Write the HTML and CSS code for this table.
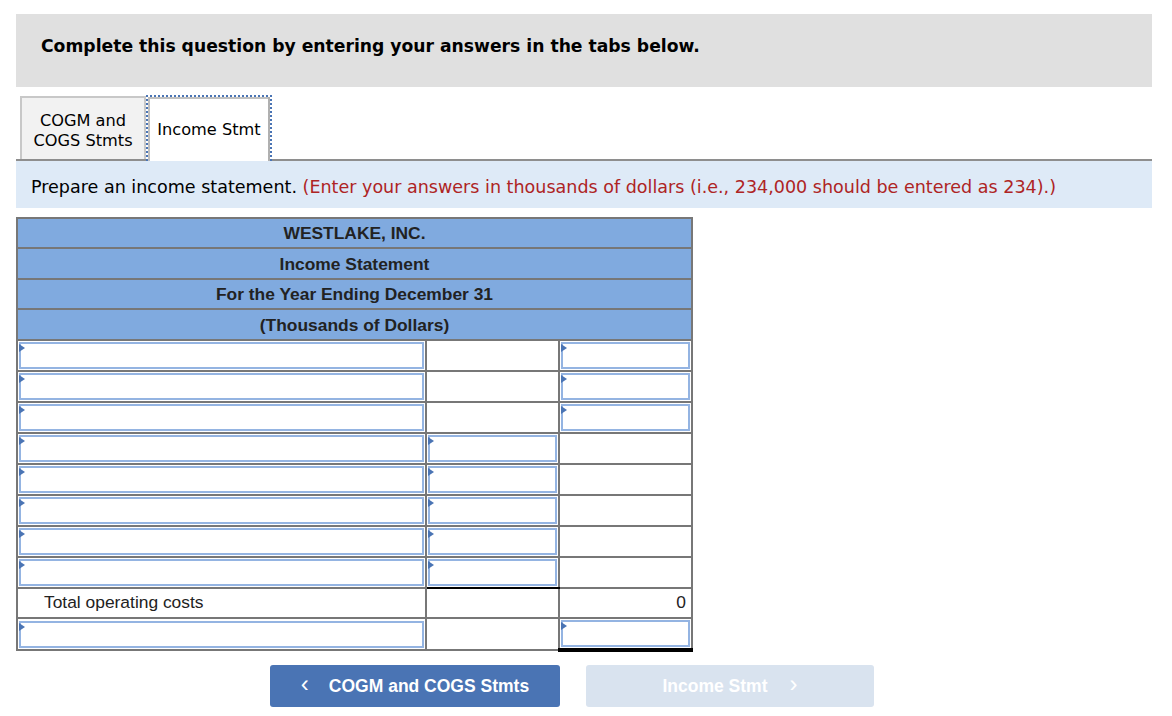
FILE: index.html
```html
<!DOCTYPE html>
<html>
<head>
<meta charset="utf-8">
<link rel="stylesheet" href="styles.css">
</head>
<body>
<div class="page">
  <div class="banner">Complete this question by entering your answers in the tabs below.</div>
  <div class="tabs">
    <div class="tab">COGM and<br>COGS Stmts</div>
    <div class="tab active">Income Stmt</div>
  </div>
  <div class="instr">Prepare an income statement. <span class="red">(Enter your answers in thousands of dollars (i.e., 234,000 should be entered as 234).)</span></div>
  <table class="stmt">
    <colgroup><col class="c1"><col class="c2"><col class="c3"></colgroup>
    <tr class="hd"><td colspan="3">WESTLAKE, INC.</td></tr>
    <tr class="hd"><td colspan="3">Income Statement</td></tr>
    <tr class="hd"><td colspan="3">For the Year Ending December 31</td></tr>
    <tr class="hd"><td colspan="3">(Thousands of Dollars)</td></tr>
    <tr><td><div class="inp"></div></td><td></td><td><div class="inp"></div></td></tr>
    <tr><td><div class="inp"></div></td><td></td><td><div class="inp"></div></td></tr>
    <tr><td><div class="inp"></div></td><td></td><td class="topblk"><div class="inp"></div></td></tr>
    <tr><td><div class="inp"></div></td><td><div class="inp"></div></td><td></td></tr>
    <tr><td><div class="inp"></div></td><td><div class="inp"></div></td><td></td></tr>
    <tr><td><div class="inp"></div></td><td><div class="inp"></div></td><td></td></tr>
    <tr><td><div class="inp"></div></td><td><div class="inp"></div></td><td></td></tr>
    <tr><td><div class="inp"></div></td><td class="botblk"><div class="inp"></div></td><td></td></tr>
    <tr><td class="label">Total operating costs</td><td></td><td class="num">0</td></tr>
    <tr><td><div class="inp"></div></td><td></td><td class="topblk dbl"><div class="inp"></div></td></tr>
  </table>
  <div class="nav">
    <div class="btn prev"><span class="chev">&lsaquo;</span>COGM and COGS Stmts</div>
    <div class="btn next">Income Stmt<span class="chev r">&rsaquo;</span></div>
  </div>
</div>
</body>
</html>
```
FILE: styles.css
```css
html, body { margin: 0; padding: 0; background: #fff; }
.page { padding: 14px 20px 0 16px; font-family: "DejaVu Sans", Verdana, sans-serif; color: #000; }
.banner {
  background: #e0e0e0;
  height: 73px;
  box-sizing: border-box;
  padding: 22px 0 0 25px;
  font-size: 17.2px;
  font-weight: bold;
}
.tabs {
  display: flex;
  align-items: flex-end;
  margin-top: 8px;
  padding-left: 4px;
  border-bottom: 2px solid #8e8e8e;
  height: 64px;
}
.tab {
  box-sizing: border-box;
  width: 126px;
  height: 63px;
  padding-top: 4px;
  background: #f2f2f2;
  border: 2px solid #c8c8c8;
  border-bottom: none;
  font-size: 16.2px;
  line-height: 20px;
  display: flex;
  align-items: center;
  justify-content: center;
  text-align: center;
  position: relative;
}
.tab.active {
  width: 126px;
  height: 66px;
  padding-top: 2px;
  background: #fff;
  border: 2px dotted #4a74b4;
  border-bottom: none;
  box-shadow: inset 2px 0 0 #c0c0c0, inset -2px 0 0 #b0b0b0, inset 0 2px 0 #c0c0c0;
  top: 2px;
}
.instr {
  background: #deeaf7;
  height: 47px;
  box-sizing: border-box;
  padding: 16px 0 0 15px;
  font-size: 17.55px;
}
.red { color: #ae2424; }
.stmt {
  margin-top: 9px;
  border-collapse: collapse;
  width: 677px;
  font-family: "Liberation Sans", Arial, sans-serif;
  font-size: 17.4px;
  color: #222;
}
col.c1 { width: 410px; }
col.c2 { width: 134px; }
col.c3 { width: 133px; }
.stmt td {
  border: 2px solid #777;
  padding: 1px;
  height: 30.45px;
  box-sizing: border-box;
}
.stmt tr.hd td {
  background: #80aadf;
  text-align: center;
  font-weight: bold;
  padding: 1px 0 0;
}
.inp {
  position: relative;
  height: 27px;
  box-sizing: border-box;
  border: 2px solid #94b4e2;
  background: #fff;
}
.inp::before {
  content: "";
  position: absolute;
  left: -2px;
  top: 0;
  border-left: 6px solid #4a74b4;
  border-top: 4px solid transparent;
  border-bottom: 4px solid transparent;
}
.stmt td.topblk { border-top: 2px solid #000; }
.stmt td.botblk { border-bottom: 2px solid #000; }
.stmt td.dbl { border-bottom: 4px solid #000; }
.stmt td.label { padding-left: 26px; color: #222; }
.stmt td.num { text-align: right; padding-right: 5px; }
.nav {
  display: flex;
  gap: 26px;
  margin-top: 13px;
  padding-left: 254px;
}
.btn {
  height: 42px;
  border-radius: 3px;
  display: flex;
  align-items: center;
  justify-content: center;
  font-family: "Liberation Sans", Arial, sans-serif;
  font-weight: bold;
  font-size: 17.5px;
  color: #fff;
}
.btn.prev { width: 290px; background: #4a74b4; }
.btn.next { width: 288px; background: #d9e3ef; }
.chev { font-weight: normal; font-size: 24px; margin-right: 20px; position: relative; top: -2px; }
.chev.r { margin-right: 0; margin-left: 22px; }
```
